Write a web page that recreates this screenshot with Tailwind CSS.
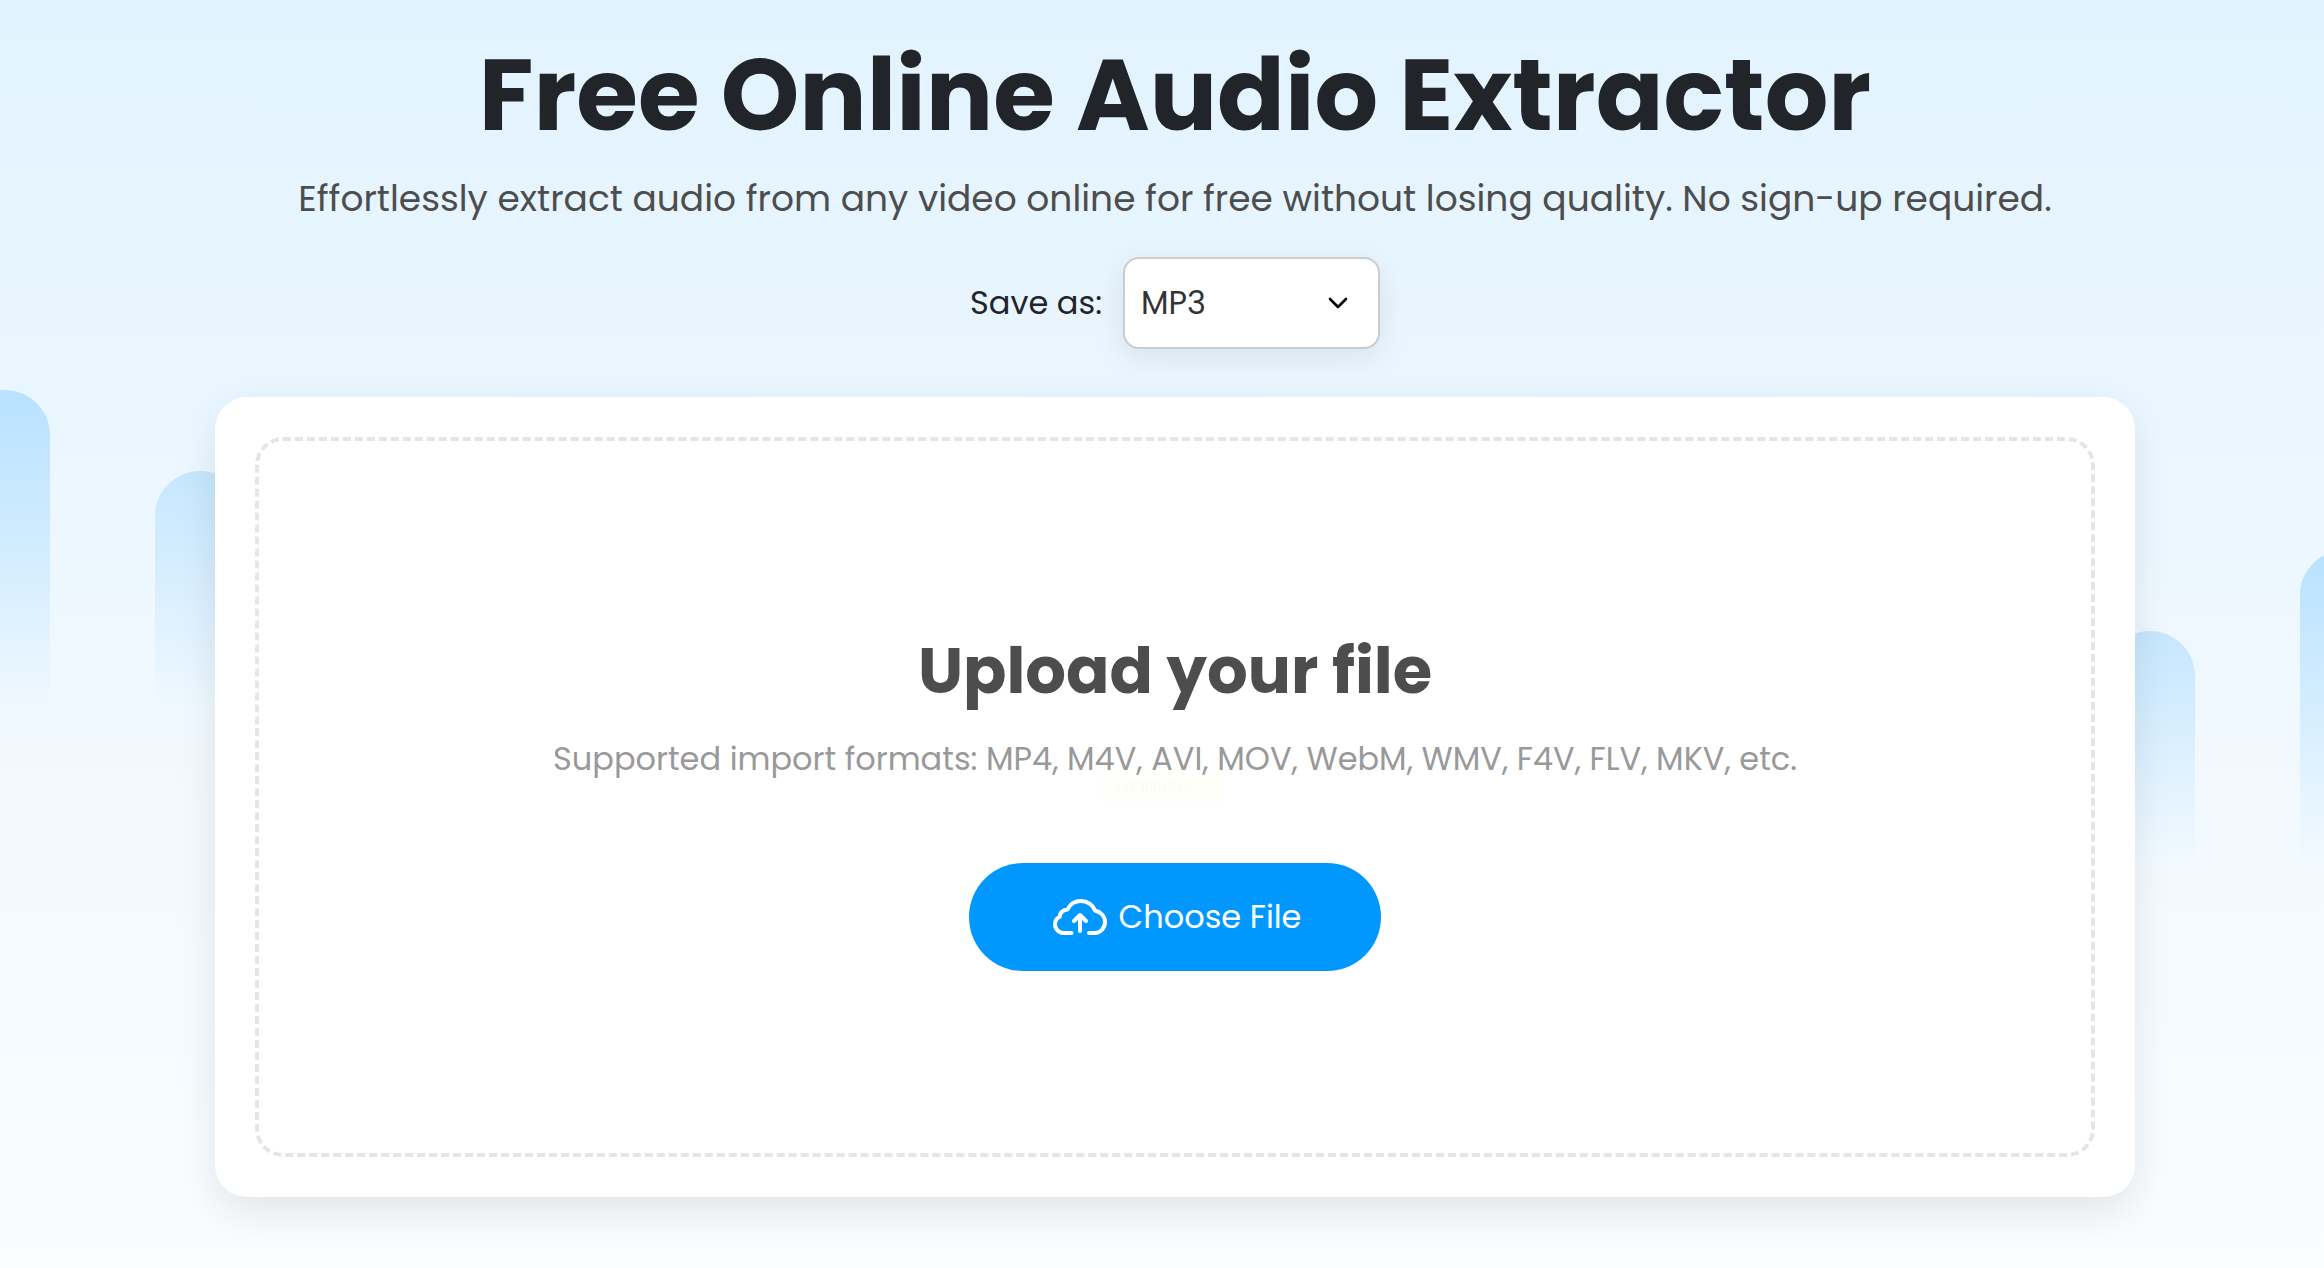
<!DOCTYPE html>
<html lang="en">
<head>
    <meta charset="UTF-8">
    <meta name="viewport" content="width=device-width, initial-scale=1.0">
    <title>Free Online Audio Extractor</title>
    <script src="https://cdn.jsdelivr.net/npm/@tailwindcss/browser@4"></script>
</head>
<body class="font-['Poppins','Inter',sans-serif] text-[#212529]">
    <main class="relative min-h-screen overflow-hidden bg-linear-to-b from-[#e2f3ff] via-[#eff8ff] to-[#fafdff] pl-[26px] pt-[33px] pb-[70px]">
        <!-- Background bars -->
        <div class="absolute -left-10 top-[390px] w-[90px] h-[320px] rounded-t-full bg-linear-to-b from-[#b8e2ff] to-[#b8e2ff]/0"></div>
        <div class="absolute left-[155px] top-[471px] w-[90px] h-[240px] rounded-t-full bg-linear-to-b from-[#c6e7ff] to-[#c6e7ff]/0"></div>
        <div class="absolute right-[129px] top-[631px] w-[90px] h-[236px] rounded-t-full bg-linear-to-b from-[#c6e7ff] to-[#c6e7ff]/0"></div>
        <div class="absolute -right-[66px] top-[550px] w-[90px] h-[316px] rounded-t-full bg-linear-to-b from-[#b8e2ff] to-[#b8e2ff]/0"></div>

        <div class="relative mx-auto max-w-[1920px] text-center">
            <h1 class="text-[100px] leading-[124px] font-bold">Free Online Audio Extractor</h1>
            <p class="mt-4 text-[36px] leading-[52px] text-[#4d4d4d]">Effortlessly extract audio from any video online for free without losing quality. No sign-up required.</p>

            <!-- Output format -->
            <div class="mt-8 flex items-center justify-center gap-[21px]">
                <label for="format" class="text-[32px]">Save as:</label>
                <div class="relative">
                    <select id="format" class="block appearance-none w-[257px] h-[92px] pl-4 rounded-2xl border-2 border-[#ccc] bg-white text-[32px] text-[#333] shadow-[0_8px_32px_rgba(0,0,0,0.08)]">
                        <option>MP3</option>
                        <option>WAV</option>
                        <option>M4A</option>
                    </select>
                    <svg class="absolute right-8 top-10 w-5 h-3 pointer-events-none" viewBox="0 0 20 12" fill="none" stroke="#000" stroke-width="2.6" stroke-linecap="round" stroke-linejoin="round"><path d="M2 2l8 8 8-8"/></svg>
                </div>
            </div>

            <!-- Upload card -->
            <section class="mt-12 p-10 rounded-[32px] bg-white shadow-[0_16px_40px_rgba(0,0,0,0.09)]">
                <div class="h-[720px] pt-2 flex flex-col items-center justify-center rounded-[28px] border-4 border-dashed border-[#e5e5e5]">
                    <h2 class="text-[64px] leading-[80px] font-bold text-[#4d4d4d]">Upload your file</h2>
                    <div class="relative mt-6">
                        <span class="absolute left-[549px] top-9 w-[120px] h-8 pl-3 text-left bg-[#fffffa] font-['Liberation_Sans',sans-serif] text-sm leading-8 text-[#fafaf6]">1763001249</span>
                        <p class="relative text-[32px] leading-[48px] text-[#999]">Supported import formats: MP4, M4V, AVI, MOV, WebM, WMV, F4V, FLV, MKV, etc.</p>
                    </div>
                    <button type="button" class="mt-20 pl-1 flex items-center justify-center gap-3 w-[412px] h-[108px] rounded-full bg-[#0098ff] text-white text-[32px]">
                        <svg class="w-[54px] h-9" viewBox="0 0 54 36" fill="none" stroke="#fff" stroke-width="4" stroke-linecap="round" stroke-linejoin="round">
                            <path d="M18.500 34H11C6 34 2 30 2 25.500C2 22 4 19 6.500 18C7 14 10 11 14.500 10.500C17 5 22 2 28 2C34.500 2 40 6 42 11.500C48 13 52 17.500 52 23C52 29 47.500 34 41.500 34H36"/>
                            <path d="M27 32V16M21 22l6-6 6 6"/>
                        </svg>
                        Choose File
                    </button>
                </div>
            </section>
        </div>
    </main>
</body>
</html>
